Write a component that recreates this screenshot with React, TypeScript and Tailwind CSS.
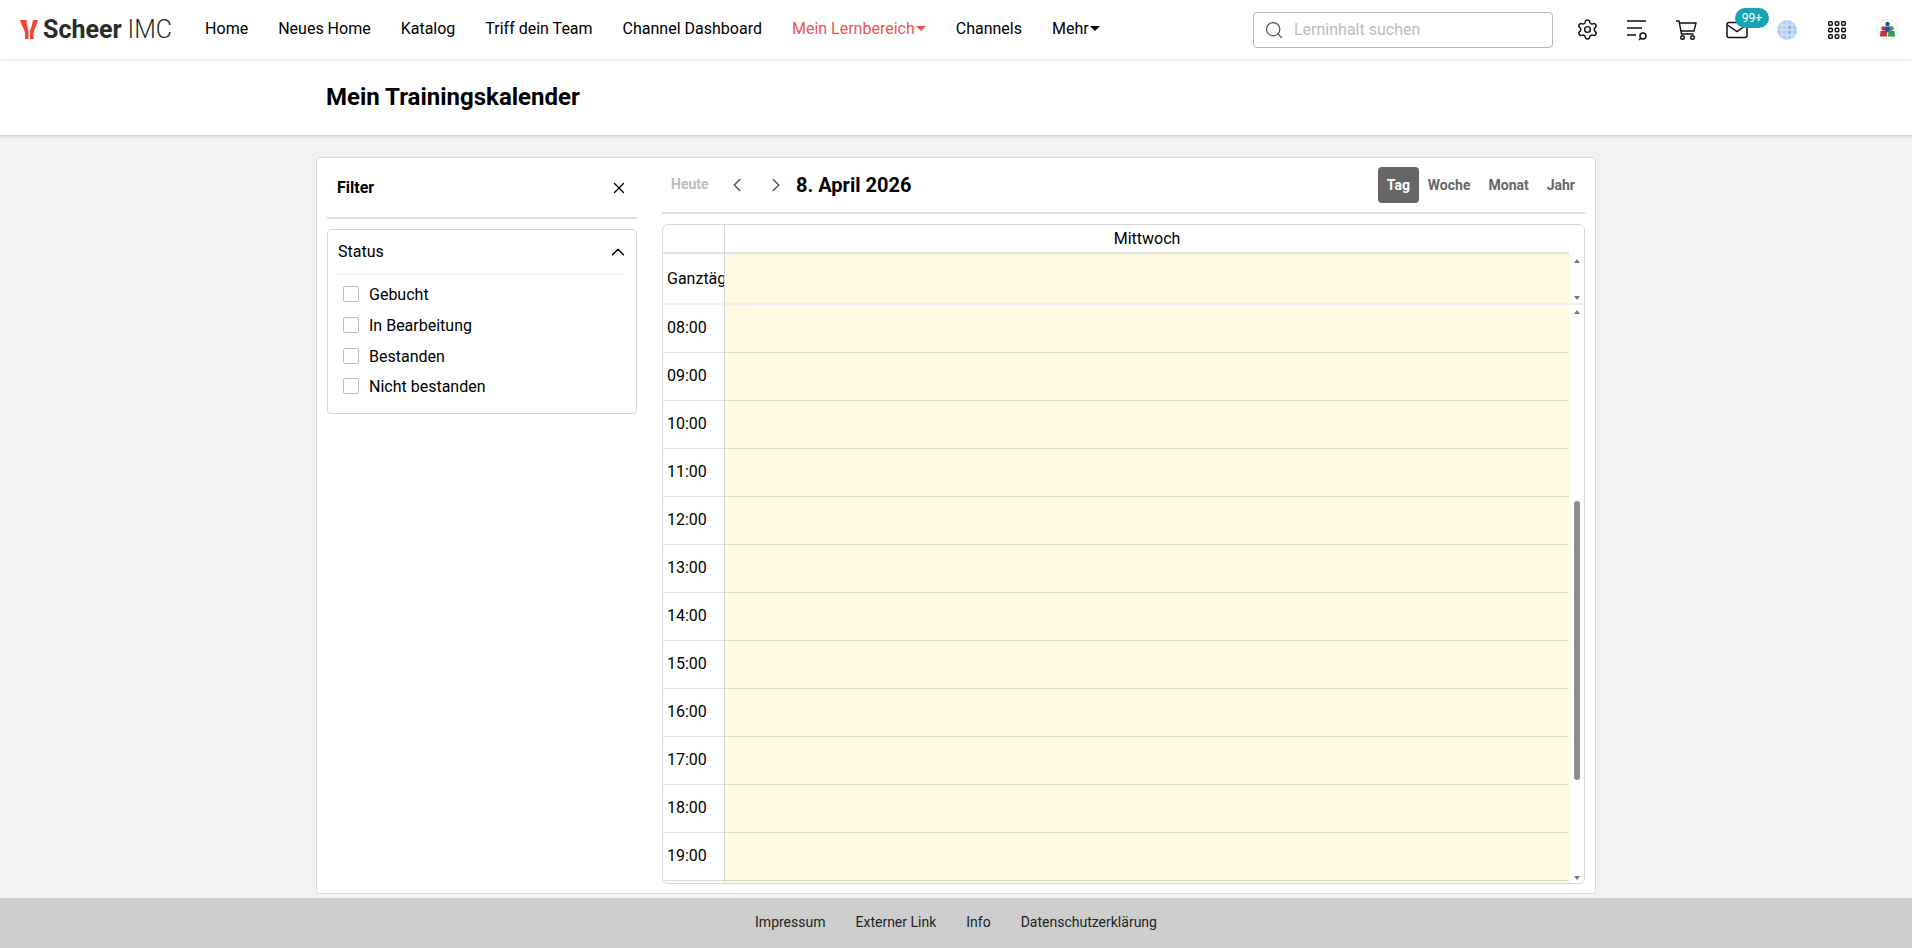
import { ChevronLeft, ChevronRight, ChevronUp, Search, Settings, X } from 'lucide-react';

const navItems = [
  { label: 'Home' },
  { label: 'Neues Home' },
  { label: 'Katalog' },
  { label: 'Triff dein Team' },
  { label: 'Channel Dashboard' },
  { label: 'Mein Lernbereich', active: true, caret: true },
  { label: 'Channels' },
  { label: 'Mehr', caret: true },
];

const statusFilters = ['Gebucht', 'In Bearbeitung', 'Bestanden', 'Nicht bestanden'];
const hours = ['08:00', '09:00', '10:00', '11:00', '12:00', '13:00', '14:00', '15:00', '16:00', '17:00', '18:00', '19:00'];
const footerLinks = ['Impressum', 'Externer Link', 'Info', 'Datenschutzerklärung'];

function Logo() {
  return (
    <div className="flex items-center">
      <svg width="18" height="19" viewBox="0 0 18 19" className="mr-[5px]">
        <path d="M0 0h6.500c.3 5 1.500 9 2 12v7H5V13C4.500 9 1 5 0 0z" fill="#f44336" />
        <path d="M18 0h-5c-.5 5-2.800 9-3 12v7h3.500v-6c.5-4 3.500-8 4.500-13z" fill="#f44336" />
      </svg>
      <span className="text-[25px] leading-none font-bold text-[#2b2b2b]">Scheer</span>
      <span className="ml-[6px] text-[25px] leading-none font-light text-[#2b2b2b]">IMC</span>
    </div>
  );
}

function ListSearchIcon() {
  return (
    <svg width="24" height="24" viewBox="0 0 24 24" fill="none" stroke="#111" strokeWidth="1.500">
      <path d="M2 3h19M2 10h15M2 17h9" />
      <circle cx="18" cy="18" r="3" />
      <path d="M15.800 20.200L14 22" />
    </svg>
  );
}

function CartIcon() {
  return (
    <svg width="24" height="24" viewBox="0 0 24 24" fill="none" stroke="#111" strokeWidth="1.400">
      <path d="M1 3h3l2.500 13h12" />
      <path d="M4.300 5H21l-2 8H6" />
      <circle cx="7.500" cy="19.500" r="1.800" />
      <circle cx="17.500" cy="19.500" r="1.800" />
    </svg>
  );
}

function MailIcon() {
  return (
    <svg width="22" height="18" viewBox="0 0 22 18" fill="none" stroke="#111" strokeWidth="1.500">
      <rect x="1" y="1.500" width="20" height="15" rx="2" />
      <path d="M1.500 4l9.500 6.500L20.500 4" />
    </svg>
  );
}

function GlobeIcon() {
  return (
    <svg width="20" height="20" viewBox="0 0 20 20">
      <circle cx="10" cy="10" r="10" fill="#aecdf2" />
      <path d="M10 0v20M0 10h20M1.500 5h17M1.500 15h17M5 1.500v17M15 1.500v17" stroke="#dce9fa" strokeWidth="1" fill="none" />
      <path d="M11 6h3v3h-3zM11 11h3v3h-3z" fill="#8fb4ea" />
    </svg>
  );
}

function GridIcon() {
  const cells = [1, 7.500, 14];
  return (
    <svg width="18" height="18" viewBox="0 0 18 18" fill="none" stroke="#111" strokeWidth="1.400">
      {cells.map((y) =>
        cells.map((x) => <rect key={`${x}-${y}`} x={x - 0.3} y={y - 0.3} width="3.600" height="3.600" rx="1" />),
      )}
    </svg>
  );
}

function AvatarIcon() {
  return (
    <svg width="21" height="21" viewBox="0 0 21 21">
      <circle cx="10.500" cy="10.500" r="10" fill="#fff" stroke="#e6e6e6" />
      <circle cx="10.500" cy="5" r="2.200" fill="#2e4a9e" />
      <path d="M8 7.500h5l.5 6h-6z" fill="#2e4a9e" />
      <circle cx="6.500" cy="9.500" r="2.200" fill="#c8323c" />
      <path d="M3.500 12h6l.8 5.500H3z" fill="#c8323c" />
      <circle cx="14.500" cy="9.500" r="2.200" fill="#2f9e4a" />
      <path d="M11.500 12h6l.5 5.500h-7z" fill="#2f9e4a" />
    </svg>
  );
}

function ScrollArrow({ down }: { down?: boolean }) {
  return down ? (
    <div className="h-0 w-0 border-x-[3.500px] border-t-[4px] border-x-transparent border-t-[#777]" />
  ) : (
    <div className="h-0 w-0 border-x-[3.500px] border-b-[4px] border-x-transparent border-b-[#777]" />
  );
}

export default function App() {
  return (
    <div className="flex h-[948px] w-full flex-col overflow-hidden bg-[#f2f2f2] font-['Roboto',sans-serif] text-[16px] text-black">
      <header className="z-20 flex h-[59px] shrink-0 items-center bg-white pl-[20px] shadow-[0_1px_4px_rgba(0,0,0,0.1)]">
        <Logo />
        <nav className="ml-[33px] flex items-center gap-[30px] pb-[2px]">
          {navItems.map((item) => (
            <a key={item.label} className={`flex items-center ${item.active ? 'text-[#ef5350]' : 'text-black'}`}>
              {item.label}
              {item.caret && (
                <span
                  className={`ml-[1px] h-0 w-0 border-x-[5px] border-t-[5px] border-x-transparent ${
                    item.active ? 'border-t-[#ef5350]' : 'border-t-black'
                  }`}
                />
              )}
            </a>
          ))}
        </nav>
        <div className="ml-auto flex items-center">
          <div className="mr-[9px] flex h-[36px] w-[300px] items-center rounded-[4px] border border-[#b5b5b5] pl-[10px]">
            <Search className="h-[20px] w-[20px] text-[#555]" strokeWidth={1.500} />
            <span className="ml-[10px] text-[16px] text-[#bdbdbd]">Lerninhalt suchen</span>
          </div>
          <div className="flex w-[50px] justify-center">
            <Settings className="h-[23px] w-[23px] text-[#111]" strokeWidth={1.500} />
          </div>
          <div className="flex w-[50px] justify-center">
            <ListSearchIcon />
          </div>
          <div className="flex w-[50px] justify-center">
            <CartIcon />
          </div>
          <div className="relative flex w-[50px] justify-center">
            <MailIcon />
            <span className="absolute top-[-13px] left-[23px] flex h-[20px] w-[34px] items-center justify-center rounded-full bg-[#17a5b3] text-[12px] text-white">
              99+
            </span>
          </div>
          <div className="flex w-[50px] justify-center">
            <GlobeIcon />
          </div>
          <div className="flex w-[50px] justify-center">
            <GridIcon />
          </div>
          <div className="flex w-[50px] justify-center">
            <AvatarIcon />
          </div>
        </div>
      </header>

      <div className="z-10 flex h-[76px] shrink-0 items-center bg-white pl-[326px] shadow-[0_1px_4px_rgba(0,0,0,0.2)]">
        <h1 className="text-[24px] font-bold">Mein Trainingskalender</h1>
      </div>

      <main className="flex min-h-0 flex-1 justify-center pt-[22px] pb-[4px]">
        <div className="flex w-[1280px] rounded-[4px] border border-[#d8d8d8] bg-white pr-[10px]">
          <aside className="ml-[10px] w-[310px] shrink-0">
            <div className="flex h-[61px] items-center justify-between border-b-2 border-[#dedede] pr-[9px] pl-[10px]">
              <span className="font-bold">Filter</span>
              <X className="h-[18px] w-[18px] text-black" strokeWidth={1.800} />
            </div>
            <div className="mt-[10px] h-[185px] rounded-[4px] border border-[#d8d8d8] px-[10px]">
              <div className="flex h-[45px] items-center justify-between border-b border-[#eeeeee]">
                <span>Status</span>
                <ChevronUp className="mr-[-3px] h-[22px] w-[22px] text-black" strokeWidth={1.600} />
              </div>
              <ul className="pt-[5px] pl-[5px]">
                {statusFilters.map((label) => (
                  <li key={label} className="flex h-[30.700px] items-center">
                    <span className="mb-[2px] h-[16px] w-[16px] rounded-[2px] border border-[#bdbdbd] bg-white" />
                    <span className="ml-[10px]">{label}</span>
                  </li>
                ))}
              </ul>
            </div>
          </aside>

          <section className="ml-[25px] flex min-w-0 flex-1 flex-col">
            <div className="flex h-[56px] items-center border-b-2 border-[#dedede] pr-[1px]">
              <span className="ml-[9px] w-[37px] pb-[1px] text-[14px] font-bold text-[#bdbdbd]">Heute</span>
              <ChevronLeft className="ml-[18px] h-[22px] w-[22px] text-[#555]" strokeWidth={1.600} />
              <ChevronRight className="ml-[17px] h-[22px] w-[22px] text-[#555]" strokeWidth={1.600} />
              <span className="ml-[9px] text-[20px] font-bold">8. April 2026</span>
              <div className="ml-auto flex items-center text-[14px] font-bold text-[#666]">
                <span className="flex h-[36px] w-[41px] items-center justify-center rounded-[4px] bg-[#666] text-white">Tag</span>
                <span className="px-[9px]">Woche</span>
                <span className="px-[9px]">Monat</span>
                <span className="px-[9px]">Jahr</span>
              </div>
            </div>

            <div className="mt-[10px] flex h-[660px] flex-col overflow-hidden rounded-[6px] border border-[#d8d8d8]">
              <div className="flex h-[29px] shrink-0">
                <div className="w-[62px] shrink-0 border-r border-b-2 border-r-[#d8d8d8] border-b-[#e2e2e2]" />
                <div className="flex-1 border-b-2 border-[#e2e2e2] text-center leading-[28px]">Mittwoch</div>
                <div className="w-[15px]" />
              </div>
              <div className="flex h-[49px] shrink-0">
                <div className="flex w-[62px] shrink-0 items-center overflow-hidden border-r border-[#d8d8d8] pl-[4px] whitespace-nowrap">
                  Ganztägig
                </div>
                <div className="flex-1 bg-[#fff9e1]" />
                <div className="flex w-[15px] flex-col items-center justify-between bg-[#fdfdfd] pt-[5px] pb-[3px]">
                  <ScrollArrow />
                  <ScrollArrow down />
                </div>
              </div>
              <div className="h-[2px] shrink-0 bg-[#f0f0f0]" />
              <div className="flex min-h-0 flex-1">
                <div className="min-w-0 flex-1">
                  {hours.map((hour) => (
                    <div key={hour} className="flex h-[48px]">
                      <div className="flex w-[62px] shrink-0 items-center border-r border-b border-r-[#d8d8d8] border-b-[#dddddd] pb-[2px] pl-[4px]">
                        {hour}
                      </div>
                      <div className="flex-1 border-b border-[#e2dece] bg-[#fff9e1]" />
                    </div>
                  ))}
                  <div className="flex h-[2px]">
                    <div className="w-[62px] shrink-0 border-r border-[#d8d8d8]" />
                    <div className="flex-1 bg-[#fff9e1]" />
                  </div>
                </div>
                <div className="flex w-[15px] flex-col items-center bg-[#fdfdfd] pt-[5px] pb-[3px]">
                  <ScrollArrow />
                  <div className="mt-[187px] h-[279px] w-[6px] shrink-0 rounded-[3px] bg-[#8e8e8e]" />
                  <div className="flex-1" />
                  <ScrollArrow down />
                </div>
              </div>
            </div>
          </section>
        </div>
      </main>

      <footer className="flex h-[50px] shrink-0 items-center justify-center gap-[30px] bg-[#cecece] pb-[2px] text-[14px] text-[#222]">
        {footerLinks.map((link) => (
          <a key={link}>{link}</a>
        ))}
      </footer>
    </div>
  );
}
